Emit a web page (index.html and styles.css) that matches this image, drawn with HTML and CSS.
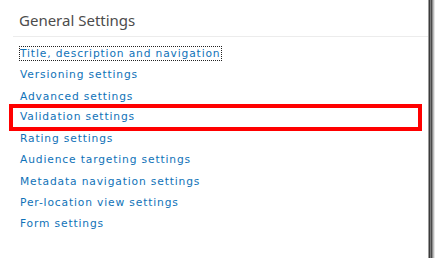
FILE: index.html
```html
<!DOCTYPE html>
<html lang="en">
<head>
    <meta charset="UTF-8">
    <meta name="viewport" content="width=device-width, initial-scale=1.0">
    <title>General Settings</title>
    <link rel="stylesheet" href="styles.css">
</head>
<body>
    <div class="shot">
        <div class="section-head">
            <h2>General Settings</h2>
        </div>
        <ul class="settings">
            <li><a href="#" class="focused">Title, description and navigation</a></li>
            <li><a href="#">Versioning settings</a></li>
            <li><a href="#">Advanced settings</a></li>
            <li class="marked"><a href="#">Validation settings</a></li>
            <li><a href="#">Rating settings</a></li>
            <li><a href="#">Audience targeting settings</a></li>
            <li><a href="#">Metadata navigation settings</a></li>
            <li><a href="#">Per-location view settings</a></li>
            <li><a href="#">Form settings</a></li>
        </ul>
    </div>
</body>
</html>
```

FILE: styles.css
```css
html, body {
    margin: 0;
    background: #fff;
    overflow: hidden;
}
.shot {
    box-sizing: border-box;
    width: 438px;
    height: 268px;
    margin: -10px 0 0 -10px;
    padding: 10px 0 0 10px;
    background: #fff;
    box-shadow:
        1px 1px 0 #9a9a9a,
        2px 2px 0 #3c3c3c,
        3px 3px 0 #7a7a7a,
        4px 4px 0 #4a4a4a,
        5px 5px 0 #8c8c8c,
        6px 6px 0 #bdbdbd,
        7px 7px 0 #e6e6e6;
}
.section-head {
    margin-left: 13px;
    padding: 10px 6px 6px;
    border-bottom: 1px solid #ececec;
}
.section-head h2 {
    margin: 0;
    font-family: "Noto Sans", sans-serif;
    font-size: 15px;
    font-weight: normal;
    line-height: 20px;
    color: #4c4c4c;
}
.settings {
    list-style: none;
    margin: 6px 0 0;
    padding: 0 0 0 20px;
    font-family: "DejaVu Sans", Verdana, sans-serif;
    font-size: 10.7px;
    letter-spacing: 0.85px;
    line-height: 21.3px;
}
.settings a {
    color: #0f72b8;
    text-decoration: none;
}
.settings a.focused {
    outline: 1px dotted #222;
    outline-offset: 0;
}
.settings .marked {
    margin: -3px 6px -2.5px -11px;
    padding: 0 7px;
    border: 4px solid #f00;
    line-height: 18.8px;
}
```
